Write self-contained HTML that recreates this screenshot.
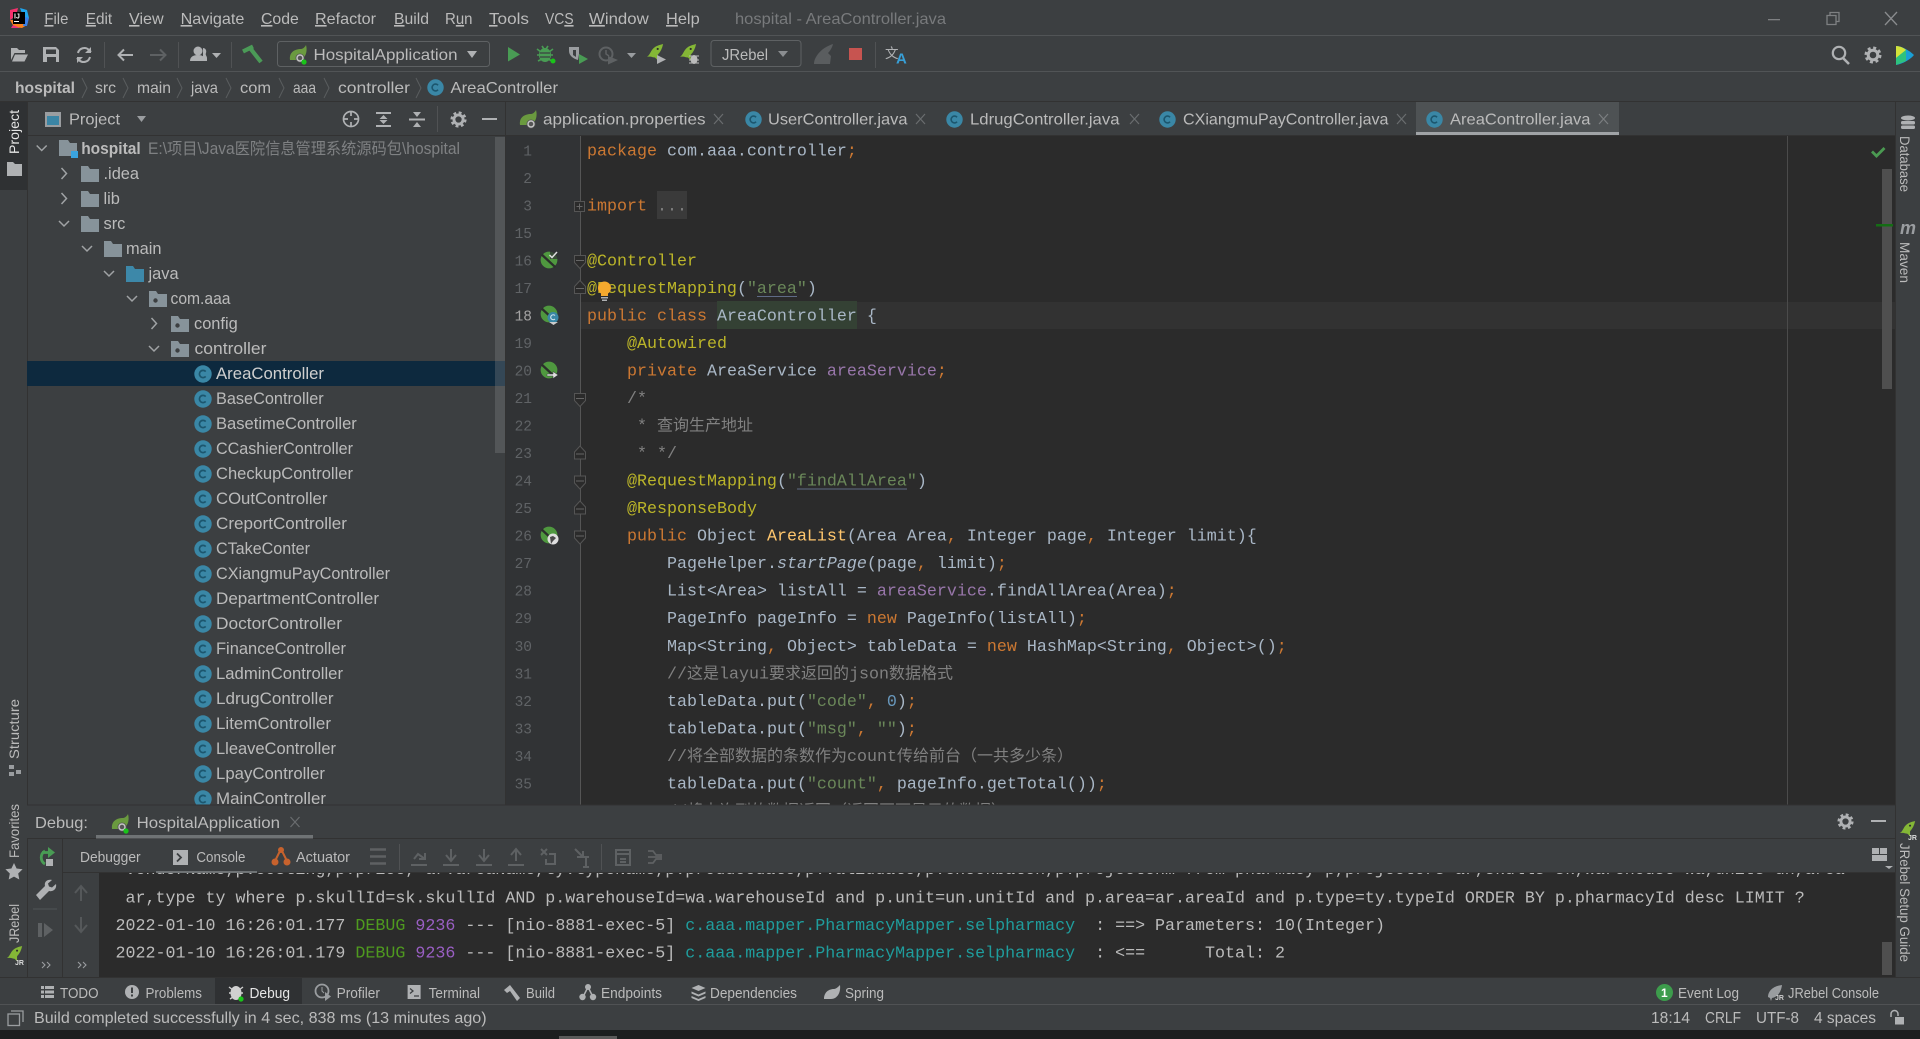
<!DOCTYPE html>
<html><head><meta charset="utf-8"><title>hospital - AreaController.java</title>
<style>
html,body{margin:0;padding:0;background:#3c3f41;overflow:hidden}
svg{display:block}
text{white-space:pre}
.s{font-family:"Liberation Sans","Noto Sans CJK SC",sans-serif;font-size:16px;fill:#bbbbbb}
.b{font-family:"Liberation Sans",sans-serif;font-size:14.5px;fill:#bbbbbb}
.t{font-family:"Liberation Sans","Noto Sans CJK SC",sans-serif;font-size:16.4px;fill:#bbbbbb}
.v{font-family:"Liberation Sans",sans-serif;font-size:14px;fill:#bbbbbb}
.m{font-family:"Liberation Mono","Noto Sans CJK SC",monospace;font-size:16.67px;fill:#a9b7c6}
.n{font-family:"Liberation Mono",monospace;font-size:14.5px;fill:#606366;text-anchor:end}
.k{fill:#cc7832}.a{fill:#bbb529}.st{fill:#6a8759}.f{fill:#9876aa}.nu{fill:#6897bb}.me{fill:#ffc66d}.c{fill:#808080}
.z{font-size:16px}
.o{fill:#bbbbbb}.de{fill:#4f9a1f}.pu{fill:#9a5fc4}.te{fill:#1f9d9d}
.ch{fill:none;stroke:#a0a3a5;stroke-width:1.5}
.nv{fill:none;stroke:#5a5d5f;stroke-width:1}
.ic{fill:#afb1b3}.il{fill:none;stroke:#afb1b3;stroke-width:2}
.dim{fill:none;stroke:#5e6163;stroke-width:2}
.fm{fill:#2b2b2b;stroke:#555;stroke-width:1}
</style></head><body>
<svg xmlns="http://www.w3.org/2000/svg" width="1920" height="1039" viewBox="0 0 1920 1039">
<defs>
<clipPath id="edc"><rect x="506" y="136" width="1389" height="669"/></clipPath>
<clipPath id="trc"><rect x="27" y="136" width="478" height="669"/></clipPath>
<clipPath id="coc"><rect x="99" y="873" width="1796" height="104"/></clipPath>
<symbol id="cl" viewBox="0 0 18 18"><circle cx="9" cy="9" r="8.7" fill="#3a87a6"/><path d="M11.7 6.6A3.6 3.6 0 1 0 11.7 11.4" fill="none" stroke="#1c566e" stroke-width="1.7"/></symbol>
<symbol id="fd" viewBox="0 0 18 18"><path d="M0 1h7l2 3h9v13H0z" fill="#87939a"/></symbol>
<symbol id="fb" viewBox="0 0 18 18"><path d="M0 1h7l2 3h9v13H0z" fill="#3d88a9"/></symbol>
<symbol id="fp" viewBox="0 0 18 18"><path d="M0 1h7l2 3h9v13H0z" fill="#87939a"/><circle cx="6.5" cy="10.500" r="2.2" fill="#3c3f41"/></symbol>
<symbol id="sp" viewBox="0 0 20 20"><path d="M1 15C0 7 6 4 12 4c2 0 4-2 5-4 2 7-1 15-8 15H3z" fill="#6a9a3f"/><circle cx="11" cy="13" r="4.500" fill="#555"/><circle cx="11" cy="13" r="3" fill="none" stroke="#c8c8c8" stroke-width="1.4"/><circle cx="15" cy="17" r="2.6" fill="#19c419"/></symbol>
<symbol id="sq" viewBox="0 0 20 20"><path d="M1 15C0 7 6 4 12 4c2 0 4-2 5-4 2 7-1 15-8 15H3z" fill="#6a9a3f"/><circle cx="12" cy="14" r="4.500" fill="#555"/><circle cx="12" cy="14" r="3" fill="none" stroke="#c8c8c8" stroke-width="1.4"/></symbol>
<symbol id="bn" viewBox="0 0 20 20"><circle cx="10" cy="10" r="9.3" fill="#4f983f"/><path d="M2 4L17 18" stroke="#2b2f2b" stroke-width="2.6" fill="none"/></symbol>
<symbol id="gr" viewBox="0 0 20 20"><circle cx="10" cy="10" r="7.2" fill="none" stroke="#afb1b3" stroke-width="2.6" stroke-dasharray="3 2.65"/><circle cx="10" cy="10" r="4.800" fill="none" stroke="#afb1b3" stroke-width="3"/></symbol>
<symbol id="rk" viewBox="0 0 20 20"><path d="M1 14C4 13 5 8 8 5 11 2 15 1 19 0 18 5 16 9 13 12L13 18 10 15C8 15 6 14 5 14z" fill="#84b736"/><circle cx="13" cy="5.500" r="1.200" fill="#2b2b2b"/></symbol>
</defs>

<rect width="1920" height="1039" fill="#3c3f41"/>

<!-- Title bar -->
<rect x="0" y="35" width="1920" height="1" fill="#515456"/>
<path d="M10 10l8-2-2 8-6 4z" fill="#f6316d"/><path d="M20 8l7 2 2 8-5 1z" fill="#1ea7f0"/><path d="M10 20l4 7 8 1 5-3-4-5z" fill="#fc801d"/><path d="M13 25l7 3-9 0z" fill="#e8337f"/><path d="M25 17l4 1-2 8-4 0z" fill="#3a80e8"/>
<rect x="13" y="12" width="12" height="12" fill="#000"/>
<text x="14" y="18.500" style="font-family:'Liberation Sans',sans-serif;font-size:7px;fill:#fff;font-weight:bold">IJ</text>
<rect x="14" y="21" width="5" height="1" fill="#fff"/>
<text class="s" x="44.400" y="24" textLength="24" lengthAdjust="spacingAndGlyphs"><tspan text-decoration="underline">F</tspan>ile</text>
<text class="s" x="85.700" y="24" textLength="26.500" lengthAdjust="spacingAndGlyphs"><tspan text-decoration="underline">E</tspan>dit</text>
<text class="s" x="129" y="24" textLength="34.700" lengthAdjust="spacingAndGlyphs"><tspan text-decoration="underline">V</tspan>iew</text>
<text class="s" x="180.600" y="24" textLength="63.800" lengthAdjust="spacingAndGlyphs"><tspan text-decoration="underline">N</tspan>avigate</text>
<text class="s" x="261" y="24" textLength="37.800" lengthAdjust="spacingAndGlyphs"><tspan text-decoration="underline">C</tspan>ode</text>
<text class="s" x="315" y="24" textLength="61" lengthAdjust="spacingAndGlyphs"><tspan text-decoration="underline">R</tspan>efactor</text>
<text class="s" x="394" y="24" textLength="35" lengthAdjust="spacingAndGlyphs"><tspan text-decoration="underline">B</tspan>uild</text>
<text class="s" x="445" y="24" textLength="27.500" lengthAdjust="spacingAndGlyphs">R<tspan text-decoration="underline">u</tspan>n</text>
<text class="s" x="489" y="24" textLength="40" lengthAdjust="spacingAndGlyphs"><tspan text-decoration="underline">T</tspan>ools</text>
<text class="s" x="545" y="24" textLength="28.600" lengthAdjust="spacingAndGlyphs">VC<tspan text-decoration="underline">S</tspan></text>
<text class="s" x="589" y="24" textLength="59.700" lengthAdjust="spacingAndGlyphs"><tspan text-decoration="underline">W</tspan>indow</text>
<text class="s" x="666" y="24" textLength="33.700" lengthAdjust="spacingAndGlyphs"><tspan text-decoration="underline">H</tspan>elp</text>
<text class="s" x="735" y="24" textLength="211" lengthAdjust="spacingAndGlyphs" style="fill:#787a7c">hospital - AreaController.java</text>
<rect x="1768" y="19" width="12" height="1.300" fill="#7e8082"/>
<path d="M1827 15.500h9v9h-9z M1830 15.500v-3h9v9h-3" fill="none" stroke="#7e8082" stroke-width="1.300"/>
<path d="M1885 12l12 13M1897 12l-12 13" fill="none" stroke="#8a8c8e" stroke-width="1.300"/>

<!-- Main toolbar -->
<rect x="0" y="71" width="1920" height="1" fill="#515456"/>
<path d="M11 48h6l2 2h6v3H14.500L11 60z" class="ic"/><path d="M15 54.500h13l-3.500 7H12z" class="ic"/>
<path d="M43 47h13l3 3v12H43zM46 49.500v4.500h10v-4.500zM47 57v5h9v-5z" class="ic" fill-rule="evenodd"/>
<path d="M78 53a6.500 6.500 0 0 1 11-3l2 2M90 57a6.500 6.500 0 0 1-11 3l-2-2" class="il"/><path d="M91 47v6h-6zM77 63v-6h6z" class="ic"/>
<rect x="104" y="42" width="1" height="26" fill="#505254"/>
<path d="M133 55h-14M124 49.500l-5.500 5.500 5.500 5.500" class="il"/>
<path d="M150 55h15M160 49.500l5.500 5.500-5.500 5.500" class="dim"/>
<rect x="178" y="42" width="1" height="26" fill="#505254"/>
<path d="M203 48c2 0 4 2 3 5-1 2 1 3 1 5v3h-4v-8z" class="ic"/><circle cx="198" cy="51" r="4.500" class="ic"/><path d="M190 61c0-4 3-6 8-6s7 2 7 6z" class="ic"/><path d="M212 53h9l-4.500 5z" class="ic"/>
<rect x="231" y="42" width="1" height="26" fill="#505254"/>
<path d="M243 51.500l10-5M250 48l11 14" stroke="#4b9a57" stroke-width="4.200" fill="none"/>
<rect x="277.500" y="41.500" width="212" height="25" rx="3" fill="#3c3f41" stroke="#5e6163"/>
<use href="#sp" x="289" y="45" width="20" height="20"/>
<text class="s" x="313.500" y="60" textLength="144" lengthAdjust="spacingAndGlyphs">HospitalApplication</text>
<path d="M467 51h10l-5 7z" fill="#afb1b3"/>
<path d="M508 47l12 7.500-12 7z" fill="#499c54"/>
<ellipse cx="545" cy="55" rx="6" ry="7" fill="#499c54"/><path d="M537 49l4 3M553 49l-4 3M537 55h3M550 55h3M538 61l4-2M552 61l-4-2M542 46l2 3M548 46l-2 3" stroke="#499c54" stroke-width="1.600" fill="none"/><path d="M540 53h10M540 57h10" stroke="#3c3f41" stroke-width="1.200"/><circle cx="553" cy="61" r="2.500" fill="#19c419"/>
<path d="M569 47h10v7l-1 6c-4-1-9-4-9-9z" fill="#9a9da0"/><path d="M573 50h3v7l-3-2z" fill="#3c3f41"/><path d="M579 54l9 5-9 5z" fill="#499c54"/>
<circle cx="606" cy="54" r="6.500" fill="none" stroke="#5e6163" stroke-width="2"/><path d="M606 50v4l3 2" stroke="#5e6163" stroke-width="1.500" fill="none"/><path d="M608 56l10 4-10 4.500z" fill="#5e6163"/>
<path d="M627 53h9l-4.500 5z" fill="#9a9da0"/>
<use href="#rk" x="646" y="44" width="18" height="18"/><path d="M657 55l9 4.500-9 4.500z" fill="#afb1b3"/>
<use href="#rk" x="679" y="44" width="18" height="18"/><ellipse cx="694" cy="59.500" rx="3.500" ry="4.500" fill="#bbb"/><path d="M689 56h10M689 60h10M689 63h10" stroke="#bbb" stroke-width="1.100"/>
<rect x="711" y="40.500" width="90" height="26" rx="3" fill="#3c3f41" stroke="#5e6163"/>
<text class="s" x="722" y="60" textLength="46" lengthAdjust="spacingAndGlyphs">JRebel</text>
<path d="M778 51h10l-5 6z" fill="#8a8d90"/>
<path d="M814 64c0-3 1-6 4-10 4-5 9-8 15-10-1 4-3 7-5 9l3 3-1 8z" fill="#5a5d5f"/>
<rect x="849" y="48" width="13" height="12" fill="#c75450"/>
<rect x="875" y="42" width="1" height="26" fill="#505254"/>
<text x="885" y="58" style="font-size:13.500px;fill:#afb1b3;font-family:'Noto Sans CJK SC',sans-serif">文</text>
<text x="896" y="63.500" style="font-size:15px;fill:#389fd6;font-weight:bold;font-family:'Liberation Sans',sans-serif">A</text>
<circle cx="1839" cy="53" r="6.200" fill="none" stroke="#afb1b3" stroke-width="2.200"/><path d="M1843 58l6 6" stroke="#afb1b3" stroke-width="2.600"/>
<use href="#gr" x="1863" y="45" width="20" height="20"/>
<path d="M1896 46c6 0 14 5 18 9-4 5-12 9-18 10z" fill="#1a9fd6"/><path d="M1896 46c4 0 8 2 10 4l-10 8z" fill="#d3e33a"/><path d="M1896 58l10-8v11l-10 4z" fill="#2ec27e"/>

<!-- Nav bar -->
<rect x="0" y="101" width="1920" height="1" fill="#323232"/>
<text class="s" x="15" y="92.800" textLength="60" lengthAdjust="spacingAndGlyphs" style="font-weight:bold">hospital</text>
<path d="M82 78l5 10-5 10" class="nv"/>
<text class="s" x="95" y="92.800" textLength="21" lengthAdjust="spacingAndGlyphs">src</text><path d="M123 78l5 10-5 10" class="nv"/>
<text class="s" x="137" y="92.800" textLength="34" lengthAdjust="spacingAndGlyphs">main</text><path d="M177 78l5 10-5 10" class="nv"/>
<text class="s" x="191" y="92.800" textLength="27" lengthAdjust="spacingAndGlyphs">java</text><path d="M226 78l5 10-5 10" class="nv"/>
<text class="s" x="240" y="92.800" textLength="31" lengthAdjust="spacingAndGlyphs">com</text><path d="M279 78l5 10-5 10" class="nv"/>
<text class="s" x="293" y="92.800" textLength="23" lengthAdjust="spacingAndGlyphs">aaa</text><path d="M324 78l5 10-5 10" class="nv"/>
<text class="s" x="338" y="92.800" textLength="72" lengthAdjust="spacingAndGlyphs">controller</text><path d="M416 78l5 10-5 10" class="nv"/>
<use href="#cl" x="427" y="79" width="17" height="17"/>
<text class="s" x="450.500" y="92.800" textLength="107.500" lengthAdjust="spacingAndGlyphs">AreaController</text>

<!-- Project panel header -->
<rect x="27" y="135" width="479" height="1" fill="#323232"/>
<rect x="45" y="112" width="16" height="15" fill="#9a9da0"/><rect x="47" y="116" width="12" height="9" fill="#3b85a5"/>
<text class="s" x="69" y="124.500" textLength="51" lengthAdjust="spacingAndGlyphs">Project</text>
<path d="M137 116h9l-4.500 6z" fill="#9a9da0"/>
<circle cx="351" cy="119" r="7.500" fill="none" stroke="#afb1b3" stroke-width="1.700"/><path d="M351 111v5M351 122v5M343 119h5M354 119h5" stroke="#afb1b3" stroke-width="1.700"/>
<path d="M376 112h15v2h-15zM376 125h15v2h-15zM383.500 115l-4 4h8zM383.500 124l-4-4h8z" class="ic"/>
<path d="M409 118.500h16v2h-16zM417 117l-4-5h8zM417 122l-4 5h8z" class="ic"/>
<rect x="437" y="106" width="1" height="26" fill="#505254"/>
<use href="#gr" x="449" y="110" width="19" height="19"/>
<rect x="482" y="118" width="15" height="2" fill="#afb1b3"/>

<!-- Left stripe -->
<rect x="27" y="102" width="1" height="703" fill="#323232"/>
<rect x="0" y="102" width="27" height="88" fill="#2f3133"/>
<text class="v" transform="translate(19,154) rotate(-90)" textLength="44" lengthAdjust="spacingAndGlyphs" style="fill:#e6e6e6">Project</text>
<path d="M7 162h6l2 2h7v12H7z" fill="#afb1b3"/>
<text class="v" transform="translate(19,759) rotate(-90)" textLength="60" lengthAdjust="spacingAndGlyphs">Structure</text>
<path d="M9 765h5v4H9zM16 770h5v4h-5zM9 772h5v4H9z" fill="#9a9da0"/>

<!-- Tree -->
<g clip-path="url(#trc)">
<rect x="27" y="361" width="478" height="25" fill="#0d293e"/>
<path d="M36.700 145.500l5 5 5-5" class="ch"/>
<path d="M59 140h9l2 3h7v13H59z" fill="#87939a"/><rect x="71" y="151" width="7" height="7" fill="#3aa3de"/>
<text class="t" x="81.200" y="154" textLength="59.500" lengthAdjust="spacingAndGlyphs" style="font-weight:bold">hospital</text>
<text class="t" x="148" y="154" textLength="312" lengthAdjust="spacingAndGlyphs" style="fill:#7f8183">E:\<tspan class="z">项目</tspan>\Java<tspan class="z">医院信息管理系统源码包</tspan>\hospital</text>

<path d="M61.500 168l5 5.500-5 5.500" class="ch"/><use href="#fd" x="81" y="165" width="18" height="18"/><text class="t" x="103.500" y="179">.idea</text>
<path d="M61.500 193l5 5.500-5 5.500" class="ch"/><use href="#fd" x="81" y="190" width="18" height="18"/><text class="t" x="103.500" y="204">lib</text>
<path d="M59 221l5 5 5-5" class="ch"/><use href="#fd" x="81" y="215" width="18" height="18"/><text class="t" x="103.500" y="229">src</text>
<path d="M82 246l5 5 5-5" class="ch"/><use href="#fd" x="104" y="240" width="18" height="18"/><text class="t" x="126" y="254">main</text>
<path d="M104 271l5 5 5-5" class="ch"/><use href="#fb" x="126" y="265" width="18" height="18"/><text class="t" x="148.500" y="279">java</text>
<path d="M127 296l5 5 5-5" class="ch"/><use href="#fp" x="149" y="290" width="18" height="18"/><text class="t" x="170.500" y="304" textLength="60" lengthAdjust="spacingAndGlyphs">com.aaa</text>
<path d="M151.500 318l5 5.500-5 5.500" class="ch"/><use href="#fp" x="171" y="315" width="18" height="18"/><text class="t" x="194" y="329">config</text>
<path d="M149 346l5 5 5-5" class="ch"/><use href="#fp" x="171" y="340" width="18" height="18"/><text class="t" x="194.500" y="354" textLength="72" lengthAdjust="spacingAndGlyphs">controller</text>

<use href="#cl" x="194" y="365" width="18" height="18"/><text class="t" x="216" y="379" textLength="108" lengthAdjust="spacingAndGlyphs" style="fill:#cfcfcf">AreaController</text>
<use href="#cl" x="194" y="390" width="18" height="18"/><text class="t" x="216" y="404" textLength="107.700" lengthAdjust="spacingAndGlyphs">BaseController</text>
<use href="#cl" x="194" y="415" width="18" height="18"/><text class="t" x="216" y="429" textLength="140.800" lengthAdjust="spacingAndGlyphs">BasetimeController</text>
<use href="#cl" x="194" y="440" width="18" height="18"/><text class="t" x="216" y="454" textLength="137" lengthAdjust="spacingAndGlyphs">CCashierController</text>
<use href="#cl" x="194" y="465" width="18" height="18"/><text class="t" x="216" y="479" textLength="137" lengthAdjust="spacingAndGlyphs">CheckupController</text>
<use href="#cl" x="194" y="490" width="18" height="18"/><text class="t" x="216" y="504" textLength="111.400" lengthAdjust="spacingAndGlyphs">COutController</text>
<use href="#cl" x="194" y="515" width="18" height="18"/><text class="t" x="216" y="529" textLength="131" lengthAdjust="spacingAndGlyphs">CreportController</text>
<use href="#cl" x="194" y="540" width="18" height="18"/><text class="t" x="216" y="554" textLength="94" lengthAdjust="spacingAndGlyphs">CTakeConter</text>
<use href="#cl" x="194" y="565" width="18" height="18"/><text class="t" x="216" y="579" textLength="174" lengthAdjust="spacingAndGlyphs">CXiangmuPayController</text>
<use href="#cl" x="194" y="590" width="18" height="18"/><text class="t" x="216" y="604" textLength="163" lengthAdjust="spacingAndGlyphs">DepartmentController</text>
<use href="#cl" x="194" y="615" width="18" height="18"/><text class="t" x="216" y="629" textLength="126" lengthAdjust="spacingAndGlyphs">DoctorController</text>
<use href="#cl" x="194" y="640" width="18" height="18"/><text class="t" x="216" y="654" textLength="130" lengthAdjust="spacingAndGlyphs">FinanceController</text>
<use href="#cl" x="194" y="665" width="18" height="18"/><text class="t" x="216" y="679" textLength="127" lengthAdjust="spacingAndGlyphs">LadminController</text>
<use href="#cl" x="194" y="690" width="18" height="18"/><text class="t" x="216" y="704" textLength="117.500" lengthAdjust="spacingAndGlyphs">LdrugController</text>
<use href="#cl" x="194" y="715" width="18" height="18"/><text class="t" x="216" y="729" textLength="115" lengthAdjust="spacingAndGlyphs">LitemController</text>
<use href="#cl" x="194" y="740" width="18" height="18"/><text class="t" x="216" y="754" textLength="120" lengthAdjust="spacingAndGlyphs">LleaveController</text>
<use href="#cl" x="194" y="765" width="18" height="18"/><text class="t" x="216" y="779" textLength="109" lengthAdjust="spacingAndGlyphs">LpayController</text>
<use href="#cl" x="194" y="790" width="18" height="18"/><text class="t" x="216" y="804" textLength="110" lengthAdjust="spacingAndGlyphs">MainController</text>
<rect x="495" y="137" width="10" height="316" fill="#7f8285" opacity=".35"/>
</g>
<rect x="505" y="102" width="1" height="703" fill="#323232"/>

<!-- Editor tabs -->
<rect x="506" y="135" width="1389" height="1" fill="#323232"/>
<rect x="1416" y="102" width="203" height="33" fill="#4e5254"/>
<rect x="1416" y="132" width="203" height="3" fill="#a0a3a6"/>
<use href="#sq" x="519" y="110" width="20" height="20"/>
<text class="s" x="543" y="124.500" textLength="162.500" lengthAdjust="spacingAndGlyphs">application.properties</text>
<path d="M714 114l9 10M723 114l-9 10" stroke="#6a6d6f" stroke-width="1.200" fill="none"/>
<use href="#cl" x="745" y="111" width="17" height="17"/>
<text class="s" x="768" y="124.500" textLength="139.500" lengthAdjust="spacingAndGlyphs">UserController.java</text>
<path d="M916 114l9 10M925 114l-9 10" stroke="#6a6d6f" stroke-width="1.200" fill="none"/>
<use href="#cl" x="946" y="111" width="17" height="17"/>
<text class="s" x="970" y="124.500" textLength="149.500" lengthAdjust="spacingAndGlyphs">LdrugController.java</text>
<path d="M1130 114l9 10M1139 114l-9 10" stroke="#6a6d6f" stroke-width="1.200" fill="none"/>
<use href="#cl" x="1159" y="111" width="17" height="17"/>
<text class="s" x="1183" y="124.500" textLength="205.500" lengthAdjust="spacingAndGlyphs">CXiangmuPayController.java</text>
<path d="M1397 114l9 10M1406 114l-9 10" stroke="#6a6d6f" stroke-width="1.200" fill="none"/>
<use href="#cl" x="1426" y="111" width="17" height="17"/>
<text class="s" x="1450" y="124.500" textLength="140.500" lengthAdjust="spacingAndGlyphs">AreaController.java</text>
<path d="M1599 114l9 10M1608 114l-9 10" stroke="#7b7e80" stroke-width="1.200" fill="none"/>

<!-- Editor -->
<rect x="506" y="136" width="74" height="669" fill="#313335"/>
<rect x="580" y="136" width="1315" height="669" fill="#2b2b2b"/>
<rect x="580" y="302" width="1315" height="27" fill="#323232"/>
<rect x="580" y="136" width="1" height="669" fill="#555555"/>
<rect x="1787" y="136" width="1" height="669" fill="#4b4b4b"/>
<rect x="657" y="191" width="30" height="28" fill="#3a3a3a"/>
<rect x="717" y="301" width="140" height="28" fill="#344134"/>
<g clip-path="url(#edc)">
<text class="n" x="532" y="155.400">1</text>
<text class="n" x="532" y="182.900">2</text>
<text class="n" x="532" y="210.400">3</text>
<text class="n" x="532" y="238">15</text>
<text class="n" x="532" y="265.500">16</text>
<text class="n" x="532" y="293">17</text>
<text class="n" x="532" y="320.500" style="fill:#a4a3a3">18</text>
<text class="n" x="532" y="348">19</text>
<text class="n" x="532" y="375.600">20</text>
<text class="n" x="532" y="403.100">21</text>
<text class="n" x="532" y="430.600">22</text>
<text class="n" x="532" y="458.100">23</text>
<text class="n" x="532" y="485.600">24</text>
<text class="n" x="532" y="513.200">25</text>
<text class="n" x="532" y="540.700">26</text>
<text class="n" x="532" y="568.200">27</text>
<text class="n" x="532" y="595.700">28</text>
<text class="n" x="532" y="623.200">29</text>
<text class="n" x="532" y="650.800">30</text>
<text class="n" x="532" y="678.300">31</text>
<text class="n" x="532" y="705.800">32</text>
<text class="n" x="532" y="733.300">33</text>
<text class="n" x="532" y="760.800">34</text>
<text class="n" x="532" y="788.400">35</text>

<use href="#bn" x="540" y="251" width="18" height="18"/><rect x="550" y="250" width="9" height="9" fill="#313335" opacity=".75"/><path d="M549.500 255l2.500 2.500 5-5.500" stroke="#ddd" stroke-width="1.500" fill="none"/>
<use href="#bn" x="540" y="305" width="18" height="18"/><circle cx="553" cy="317.500" r="5.500" fill="#3a87a6"/><path d="M555 315.500a2.500 2.500 0 1 0 0 3.500" stroke="#cfe3ee" stroke-width="1.100" fill="none"/><path d="M549 322h9l-4.500 3z" fill="#ccc"/>
<use href="#bn" x="540" y="361" width="18" height="18"/><path d="M547 374h6v-2.500l5 3.500-5 3.500V376h-6z" fill="#ddd" stroke="#3c3f41" stroke-width=".5"/>
<use href="#bn" x="540" y="526" width="18" height="18"/><circle cx="553" cy="539" r="5.500" fill="#dfdfdf"/><path d="M550 537l3-1 3 2-3 3-2 3z" fill="#4a4a4a"/>

<rect x="574.500" y="201.500" width="10" height="10" class="fm"/><path d="M576.500 206.500h6M579.500 203.500v6" stroke="#666" fill="none"/>
<path d="M574.500 255.500h11v7l-5.500 6-5.500-6z" class="fm"/><path d="M576 260.500h8" stroke="#666"/>
<path d="M574.500 293.500h11v-7l-5.500-6-5.500 6z" class="fm"/><path d="M576 288.500h8" stroke="#666"/>
<path d="M574.500 393.500h11v7l-5.500 6-5.500-6z" class="fm"/><path d="M576 398.500h8" stroke="#666"/>
<path d="M574.500 459h11v-7l-5.500-6-5.500 6z" class="fm"/><path d="M576 454h8" stroke="#666"/>
<path d="M574.500 476h11v7l-5.500 6-5.500-6z" class="fm"/><path d="M576 481h8" stroke="#666"/>
<path d="M574.500 514h11v-7l-5.500-6-5.500 6z" class="fm"/><path d="M576 509h8" stroke="#666"/>
<path d="M574.500 531h11v7l-5.500 6-5.500-6z" class="fm"/><path d="M576 536h8" stroke="#666"/>

<text class="m" x="587" y="155.400"><tspan class="k">package</tspan> com.aaa.controller<tspan class="k">;</tspan></text>
<text class="m" x="587" y="210.400"><tspan class="k">import</tspan> <tspan fill="#808080">...</tspan></text>
<text class="m a" x="587" y="265.500">@Controller</text>
<text class="m a" x="587" y="293">@RequestMapping<tspan style="fill:#a9b7c6">(</tspan><tspan class="st">"area"</tspan><tspan style="fill:#a9b7c6">)</tspan></text>
<rect x="757" y="296" width="40" height="1" fill="#5f6b86"/>
<circle cx="604.500" cy="288" r="6.500" fill="#f5a92e"/><rect x="601" y="292" width="7" height="4" fill="#f5a92e"/><rect x="601" y="297" width="7" height="1.500" fill="#afb1b3"/><rect x="602" y="299.500" width="5" height="1.500" fill="#afb1b3"/>
<text class="m" x="587" y="320.500"><tspan class="k">public class</tspan> AreaController {</text>
<text class="m a" x="627" y="348">@Autowired</text>
<text class="m" x="627" y="375.600"><tspan class="k">private</tspan> AreaService <tspan class="f">areaService</tspan><tspan class="k">;</tspan></text>
<text class="m c" x="627" y="403.100">/*</text>
<text class="m c" x="637" y="430.600">* <tspan class="z">查询生产地址</tspan></text>
<text class="m c" x="637" y="458.100">* */</text>
<text class="m a" x="627" y="485.600">@RequestMapping<tspan style="fill:#a9b7c6">(</tspan><tspan class="st">"findAllArea"</tspan><tspan style="fill:#a9b7c6">)</tspan></text>
<rect x="797" y="488.500" width="110" height="1" fill="#5f6b86"/>
<text class="m a" x="627" y="513.200">@ResponseBody</text>
<text class="m" x="627" y="540.700"><tspan class="k">public</tspan> Object <tspan class="me">AreaList</tspan>(Area Area<tspan class="k">,</tspan> Integer page<tspan class="k">,</tspan> Integer limit){</text>
<text class="m" x="667" y="568.200">PageHelper.<tspan font-style="italic">startPage</tspan>(page<tspan class="k">,</tspan> limit)<tspan class="k">;</tspan></text>
<text class="m" x="667" y="595.700">List&lt;Area&gt; listAll = <tspan class="f">areaService</tspan>.findAllArea(Area)<tspan class="k">;</tspan></text>
<text class="m" x="667" y="623.200">PageInfo pageInfo = <tspan class="k">new</tspan> PageInfo(listAll)<tspan class="k">;</tspan></text>
<text class="m" x="667" y="650.800">Map&lt;String<tspan class="k">,</tspan> Object&gt; tableData = <tspan class="k">new</tspan> HashMap&lt;String<tspan class="k">,</tspan> Object&gt;()<tspan class="k">;</tspan></text>
<text class="m c" x="667" y="678.300">//<tspan class="z">这是</tspan>layui<tspan class="z">要求返回的</tspan>json<tspan class="z">数据格式</tspan></text>
<text class="m" x="667" y="705.800">tableData.put(<tspan class="st">"code"</tspan><tspan class="k">,</tspan> <tspan class="nu">0</tspan>)<tspan class="k">;</tspan></text>
<text class="m" x="667" y="733.300">tableData.put(<tspan class="st">"msg"</tspan><tspan class="k">,</tspan> <tspan class="st">""</tspan>)<tspan class="k">;</tspan></text>
<text class="m c" x="667" y="760.800">//<tspan class="z">将全部数据的条数作为</tspan>count<tspan class="z">传给前台（一共多少条）</tspan></text>
<text class="m" x="667" y="788.400">tableData.put(<tspan class="st">"count"</tspan><tspan class="k">,</tspan> pageInfo.getTotal())<tspan class="k">;</tspan></text>
<text class="m c" x="667" y="815.900">//<tspan class="z">将查询到的数据返回（返回页面显示的数据）</tspan></text>
</g>
<rect x="1882" y="169" width="10" height="220" fill="#4f4f4f"/>
<rect x="1876" y="224" width="17" height="2.500" fill="#146d14"/>
<path d="M1872 151.500l4.500 4.500 8-8" fill="none" stroke="#4b9a52" stroke-width="2.800"/>

<!-- Right stripe -->
<rect x="1895" y="102" width="1" height="875" fill="#323232"/>
<ellipse cx="1908" cy="118" rx="7" ry="2.500" fill="#afb1b3"/><rect x="1901" y="121" width="14" height="3.500" rx="1.500" fill="#afb1b3"/><rect x="1901" y="125.500" width="14" height="3.500" rx="1.500" fill="#afb1b3"/>
<text class="v" transform="translate(1900,136) rotate(90)" textLength="56" lengthAdjust="spacingAndGlyphs">Database</text>
<text transform="translate(1900,234)" style="font-family:'Liberation Sans',sans-serif;font-size:18px;font-weight:bold;font-style:italic;fill:#9a9da0" textLength="16" lengthAdjust="spacingAndGlyphs">m</text>
<text class="v" transform="translate(1900,242) rotate(90)" textLength="41" lengthAdjust="spacingAndGlyphs">Maven</text>

<!-- Debug panel -->
<rect x="0" y="805" width="1895" height="172" fill="#3c3f41"/>
<rect x="27" y="804.500" width="1868" height="1" fill="#323232"/>
<rect x="27" y="838" width="1868" height="1" fill="#323232"/>
<text class="s" x="35" y="828" textLength="53" lengthAdjust="spacingAndGlyphs">Debug:</text>
<use href="#sp" x="111" y="814" width="20" height="20"/>
<text class="s" x="136.600" y="828" textLength="143.400" lengthAdjust="spacingAndGlyphs">HospitalApplication</text>
<path d="M290.500 817l9 10M299.500 817l-9 10" stroke="#6a6d6f" stroke-width="1.200" fill="none"/>
<rect x="96" y="835" width="217" height="3.500" fill="#6f7375"/>
<use href="#gr" x="1836" y="812" width="19" height="19"/>
<rect x="1871" y="820" width="15" height="2" fill="#afb1b3"/>

<rect x="27" y="839" width="1" height="138" fill="#323232"/>
<rect x="62" y="839" width="1" height="138" fill="#323232"/>
<rect x="62" y="872" width="1833" height="1" fill="#323232"/>
<rect x="156" y="871" width="101" height="2" fill="#6f7375"/>
<text class="b" x="80" y="861.800" textLength="60.600" lengthAdjust="spacingAndGlyphs">Debugger</text>
<rect x="173" y="850" width="15" height="15" fill="#afb1b3"/><path d="M177 853.500l4 4-4 4" stroke="#3c3f41" stroke-width="1.800" fill="none"/>
<text class="b" x="196.400" y="861.800" textLength="49" lengthAdjust="spacingAndGlyphs">Console</text>
<path d="M281 849l-7 14M281 849l7 14" stroke="#c7622d" stroke-width="2" fill="none"/><circle cx="281" cy="850" r="3" fill="#c7622d"/><circle cx="275" cy="862" r="3.500" fill="#c7622d"/><circle cx="287" cy="862" r="3.500" fill="#c7622d"/>
<text class="b" x="296" y="861.800" textLength="54" lengthAdjust="spacingAndGlyphs">Actuator</text>
<path d="M370 849.500h16M370 856.500h16M370 863.500h16" stroke="#5e6163" stroke-width="2.500" fill="none"/>
<rect x="399" y="844" width="1" height="26" fill="#505254"/>
<g stroke="#5e6163" stroke-width="2" fill="none">
<path d="M411 865h16M414 859l4-5 7 5M425 853v6h-6"/>
<path d="M443 865h16M451 849v11M446 855l5 6 5-6"/>
<path d="M476 865h16M484 849v11M479 855l5 6 5-6"/>
<path d="M508 865h16M516 861v-11M511 855l5-6 5 6"/>
<path d="M541 849l6 6M547 849l-6 6M549 854h6v10h-9v-5"/>
<path d="M575 849l8 8M583 851v6h-6M586 857v10M583 857h6M583 867h6"/>
</g>
<rect x="601" y="844" width="1" height="26" fill="#505254"/>
<rect x="616" y="850" width="14" height="15" fill="none" stroke="#5e6163" stroke-width="2"/><path d="M616 854h14M620 859h6M620 862h6" stroke="#5e6163" stroke-width="2" fill="none"/>
<path d="M648 851h5l3 4h6M648 863h5l3-4h6M648 857h14" stroke="#5e6163" stroke-width="1.800" fill="none"/>
<path d="M1872 848h7v6h-7zM1880 848h7v6h-7zM1872 855h15v6h-15z" fill="#afb1b3"/>
<path d="M1885 866h8l-4 3z" fill="#afb1b3"/>

<!-- Debug left buttons -->
<path d="M45 864a7.500 7.500 0 0 1 0-13" fill="none" stroke="#499c54" stroke-width="2.800"/><path d="M42 852.500h7" stroke="#499c54" stroke-width="2.800"/><path d="M48 847l7 5.500-7 5.500z" fill="#499c54"/><rect x="46" y="859" width="7" height="7" fill="#afb1b3"/>
<path d="M37 895l9-9c-1-4 2-7 7-6l-4 3.500 1 3 3 1 4-3.500c1 5-3 8-7 7l-9 9z" fill="#afb1b3" transform="translate(-1,0)"/>
<rect x="33" y="908.500" width="24" height="1" fill="#515456"/>
<rect x="38" y="923" width="4" height="14" fill="#5e6163"/><path d="M44 923l9 7-9 7z" fill="#5e6163"/>
<path d="M42 962l3 3-3 3M47 962l3 3-3 3M78 962l3 3-3 3M83 962l3 3-3 3" stroke="#9a9da0" stroke-width="1.100" fill="none"/>
<path d="M81 901v-14M75 893l6-7 6 7" stroke="#55585a" stroke-width="2" fill="none"/>
<path d="M81 917v14M75 925l6 7 6-7" stroke="#55585a" stroke-width="2" fill="none"/>

<!-- Console -->
<rect x="99" y="873" width="1796" height="104" fill="#2b2b2b"/>
<g clip-path="url(#coc)">
<text class="m o" x="125.500" y="874">venderName,p.costing,p.price, ar.areaName,ty.typeName,p.producedate,p.validdate,p.checkbatch,p.projectcnm from pharmacy p,projectors ar,skulls sk,warehouse wa,units un,area</text>
<text class="m o" x="115.500" y="902.700"> ar,type ty where p.skullId=sk.skullId AND p.warehouseId=wa.warehouseId and p.unit=un.unitId and p.area=ar.areaId and p.type=ty.typeId ORDER BY p.pharmacyId desc LIMIT ?</text>
<text class="m o" x="115.500" y="930.200">2022-01-10 16:26:01.177 <tspan class="de">DEBUG</tspan> <tspan class="pu">9236</tspan> --- [nio-8881-exec-5] <tspan class="te">c.aaa.mapper.PharmacyMapper.selpharmacy</tspan>  : ==&gt; Parameters: 10(Integer)</text>
<text class="m o" x="115.500" y="957.700">2022-01-10 16:26:01.179 <tspan class="de">DEBUG</tspan> <tspan class="pu">9236</tspan> --- [nio-8881-exec-5] <tspan class="te">c.aaa.mapper.PharmacyMapper.selpharmacy</tspan>  : &lt;==      Total: 2</text>
</g>
<rect x="1882" y="942" width="10" height="33" fill="#4f4f4f"/>

<!-- Left stripe lower -->
<text class="v" transform="translate(19,858) rotate(-90)" textLength="54" lengthAdjust="spacingAndGlyphs">Favorites</text>
<path d="M14 863l2.600 5.500 6 .8-4.400 4.200 1.100 6-5.300-2.900-5.300 2.900 1.100-6-4.400-4.200 6-.8z" fill="#afb1b3"/>
<text class="v" transform="translate(19,943) rotate(-90)" textLength="39" lengthAdjust="spacingAndGlyphs">JRebel</text>
<use href="#rk" x="6" y="946" width="17" height="17"/>
<text x="15" y="965" style="font-family:'Liberation Sans',sans-serif;font-size:7px;font-weight:bold;fill:#ddd">JR</text>
<!-- Right stripe lower -->
<use href="#rk" x="1899" y="821" width="17" height="17"/>
<text x="1908" y="840" style="font-family:'Liberation Sans',sans-serif;font-size:7px;font-weight:bold;fill:#ddd">JR</text>
<text class="v" transform="translate(1900,843) rotate(90)" textLength="119" lengthAdjust="spacingAndGlyphs">JRebel Setup Guide</text>

<!-- Bottom tool bar -->
<rect x="0" y="977" width="1920" height="1" fill="#323232"/>
<rect x="0" y="1004" width="1920" height="1" fill="#505254"/>
<rect x="215" y="978" width="87" height="26" fill="#2f3133"/>
<path d="M41 986h3v3h-3zM41 990.500h3v3h-3zM41 995h3v3h-3zM45 986h9v3h-9zM45 990.500h9v3h-9zM45 995h9v3h-9z" fill="#afb1b3"/>
<text class="b" x="60" y="998" textLength="38.500" lengthAdjust="spacingAndGlyphs">TODO</text>
<circle cx="132" cy="992" r="7" fill="#afb1b3"/><rect x="131" y="987.500" width="2" height="5.500" fill="#3c3f41"/><rect x="131" y="994.500" width="2" height="2" fill="#3c3f41"/>
<text class="b" x="145.500" y="998" textLength="56.500" lengthAdjust="spacingAndGlyphs">Problems</text>
<ellipse cx="236" cy="993" rx="5.500" ry="7" fill="#d0d0d0"/><path d="M229 987l4 3M243 987l-4 3M229 993h3M240 993h3M230 999l3-2M242 999l-3-2" stroke="#d0d0d0" stroke-width="1.400" fill="none"/><circle cx="241" cy="999" r="2.600" fill="#19c419"/>
<text class="b" x="249.500" y="998" textLength="40.500" lengthAdjust="spacingAndGlyphs" style="fill:#e6e6e6">Debug</text>
<circle cx="322" cy="991" r="6.500" fill="none" stroke="#9a9da0" stroke-width="1.800"/><path d="M322 987v4l2 2" stroke="#9a9da0" fill="none"/><path d="M325 992l6 4.500-6 4.500z" fill="#9a9da0"/>
<text class="b" x="336.600" y="998" textLength="43.400" lengthAdjust="spacingAndGlyphs">Profiler</text>
<rect x="407.600" y="985" width="13" height="14" fill="#afb1b3"/><path d="M410 988.500l3 2.500-3 2.500M414 996h5" stroke="#3c3f41" stroke-width="1.300" fill="none"/>
<text class="b" x="428.600" y="998" textLength="51.400" lengthAdjust="spacingAndGlyphs">Terminal</text>
<path d="M504 990l6-5 10 13-3 3-7-10-3 2z" fill="#afb1b3"/>
<text class="b" x="526" y="998" textLength="29" lengthAdjust="spacingAndGlyphs">Build</text>
<circle cx="588" cy="987" r="3" fill="#afb1b3"/><circle cx="582.500" cy="997" r="3.200" fill="#afb1b3"/><circle cx="593" cy="997" r="3.200" fill="#afb1b3"/><path d="M588 987l-5 10M588 987l5 10" stroke="#afb1b3" stroke-width="1.500"/>
<text class="b" x="601" y="998" textLength="61" lengthAdjust="spacingAndGlyphs">Endpoints</text>
<path d="M698.500 985l7 3-7 3-7-3zM691.500 991.500l7 3 7-3v2l-7 3-7-3zM691.500 996l7 3 7-3v2l-7 3-7-3z" fill="#afb1b3"/>
<text class="b" x="710" y="998" textLength="87" lengthAdjust="spacingAndGlyphs">Dependencies</text>
<path d="M824 999c0-7 5-10 10-10 2 0 4-2 6-4 1 8-3 14-9 14z" fill="#afb1b3"/>
<text class="b" x="845" y="998" textLength="39" lengthAdjust="spacingAndGlyphs">Spring</text>
<circle cx="1664.500" cy="992.500" r="8.500" fill="#3d9c4c"/><text x="1661" y="997" style="font-family:'Liberation Sans',sans-serif;font-size:12px;fill:#fff;font-weight:bold">1</text>
<text class="b" x="1678" y="998" textLength="61" lengthAdjust="spacingAndGlyphs">Event Log</text>
<path d="M1768 997c0-6 5-11 14-12-1 8-5 12-10 13l-1 3-1-3z" fill="#9a9da0"/>
<text x="1775" y="1000" style="font-family:'Liberation Sans',sans-serif;font-size:7px;font-weight:bold;fill:#ccc">JR</text>
<text class="b" x="1788" y="998" textLength="91" lengthAdjust="spacingAndGlyphs">JRebel Console</text>

<!-- Status bar -->
<path d="M11 1011h12v11" fill="none" stroke="#9a9da0" stroke-width="1.300"/><rect x="8" y="1014" width="11.500" height="11.500" fill="none" stroke="#9a9da0" stroke-width="1.300"/>
<text class="s" x="34" y="1023" textLength="452.600" lengthAdjust="spacingAndGlyphs">Build completed successfully in 4 sec, 838 ms (13 minutes ago)</text>
<text class="s" x="1651" y="1023" textLength="39" lengthAdjust="spacingAndGlyphs">18:14</text>
<text class="s" x="1705" y="1023" textLength="36" lengthAdjust="spacingAndGlyphs">CRLF</text>
<text class="s" x="1756" y="1023" textLength="43" lengthAdjust="spacingAndGlyphs">UTF-8</text>
<text class="s" x="1814" y="1023" textLength="62" lengthAdjust="spacingAndGlyphs">4 spaces</text>
<rect x="1895" y="1017" width="9" height="7.500" fill="#afb1b3"/><path d="M1891 1017v-3a3.500 3.500 0 0 1 7 0v2" fill="none" stroke="#afb1b3" stroke-width="1.500"/>

<!-- Taskbar sliver -->
<rect x="0" y="1030" width="1920" height="9" fill="#1c1e1f"/>
<rect x="559" y="1036" width="58" height="3" fill="#5a5a5a"/>
<text class="s" x="1767" y="1049" style="font-size:14px;fill:#e8e8e8">16:27</text>
</svg>
</body></html>
